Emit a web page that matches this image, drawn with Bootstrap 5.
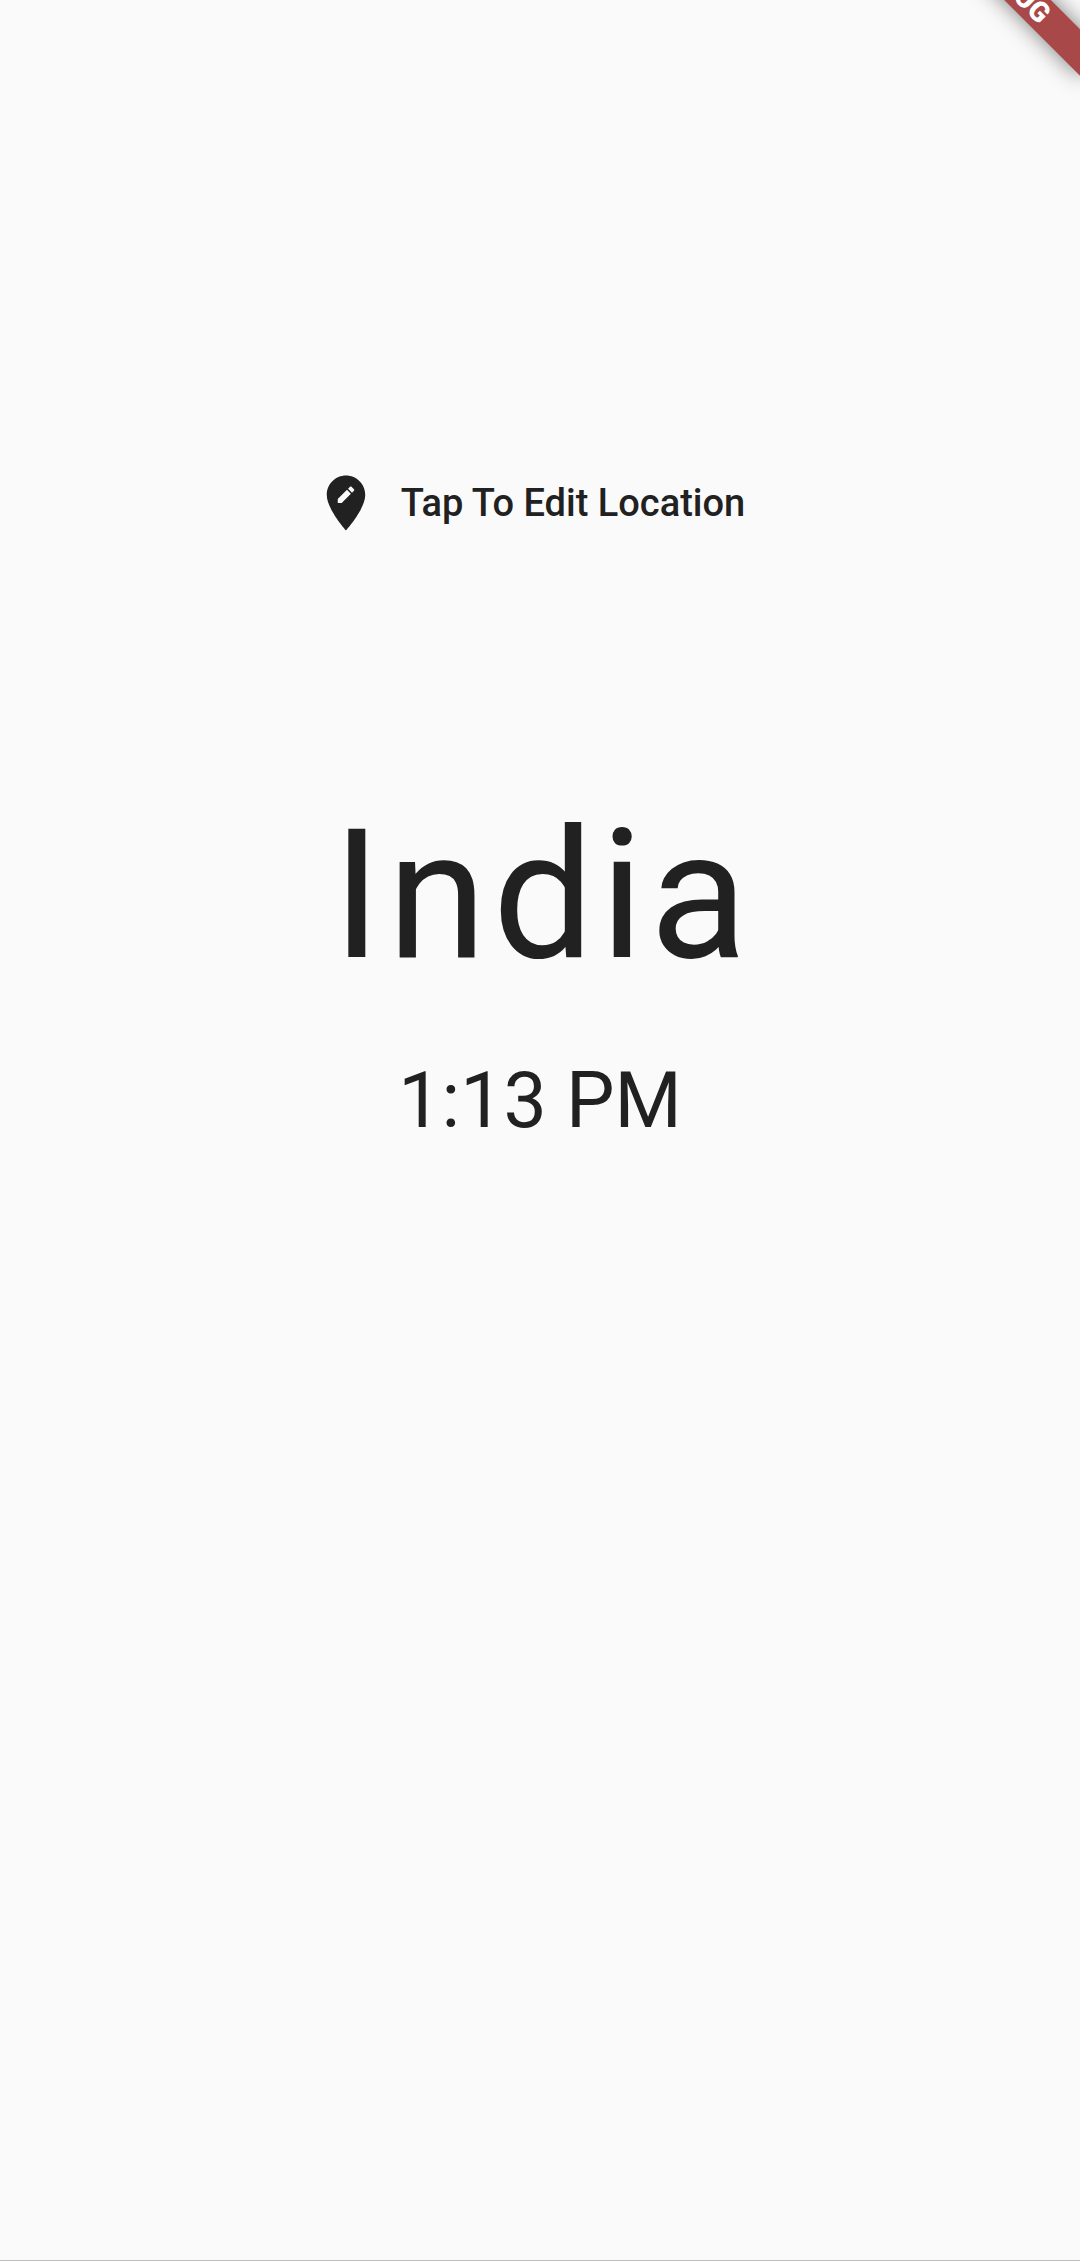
<!DOCTYPE html>
<html lang="en">
<head>
<meta charset="utf-8">
<meta name="viewport" content="width=device-width, initial-scale=1">
<title>World Time</title>
<link href="https://cdn.jsdelivr.net/npm/bootstrap@5.3.0/dist/css/bootstrap.min.css" rel="stylesheet">
<style>
  body { background: #fafafa; color: #212121; font-family: Roboto, sans-serif; }
  .screen { border-bottom: 1px solid #bdbdbd; padding-top: 459px; }
  .location-btn { color: inherit; font-size: 38px; font-weight: 500; line-height: 48px; gap: 22px; padding: 11px 22px 11px 0; }
  .location-btn svg { width: 66px; height: 66px; fill: currentColor; }
  .place { font-size: 180px; line-height: 212px; letter-spacing: 6px; margin: 243px 0 0; padding-left: 6px; }
  .clock { font-size: 77px; line-height: 92px; margin: 53px 0 0; }
  .ribbon { top: -30px; right: -44px; width: 220px; height: 33px; background: #a94848; color: #fff; font-size: 28px; font-weight: 900; line-height: 33px; transform: rotate(45deg); box-shadow: 0 0 22px rgba(0, 0, 0, .5); }
</style>
</head>
<body>
<main class="screen position-relative overflow-hidden min-vh-100 d-flex flex-column align-items-center">
  <div class="ribbon position-absolute text-center" aria-hidden="true">DEBUG</div>
  <button type="button" class="location-btn btn border-0 d-flex align-items-center">
    <svg viewBox="0 0 24 24" aria-hidden="true"><path d="M12 2C8.14 2 5 5.14 5 9c0 5.25 7 13 7 13s7-7.75 7-13c0-3.86-3.14-7-7-7zm-1.56 10H9v-1.44l3.35-3.34 1.43 1.43L10.44 12zm4.45-4.45l-.7.7-1.44-1.44.7-.7c.15-.15.39-.15.54 0l.9.9c.15.15.15.39 0 .54z"/></svg>
    <span>Tap To Edit Location</span>
  </button>
  <h1 class="place fw-normal">India</h1>
  <p class="clock">1:13 PM</p>
</main>
<script src="https://cdn.jsdelivr.net/npm/bootstrap@5.3.0/dist/js/bootstrap.bundle.min.js"></script>
</body>
</html>
